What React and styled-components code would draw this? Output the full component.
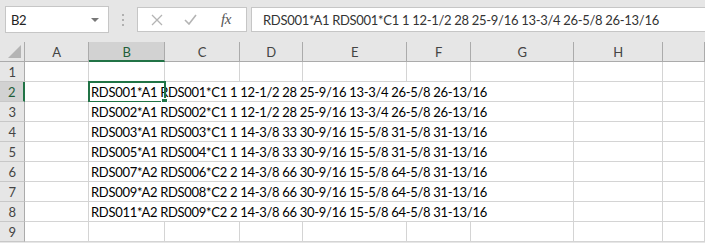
import React from 'react';
import styled, { createGlobalStyle, css } from 'styled-components';

const GlobalStyle = createGlobalStyle`
  html, body {
    margin: 0;
    padding: 0;
    background: #ffffff;
  }
  body {
    width: 705px;
    height: 243px;
    overflow: hidden;
    font-family: Lato, "Liberation Sans", sans-serif;
  }
`;

const GREEN = '#217346';
const GRID = '#d4d4d4';
const HEAD_LINE = '#ababab';

const columns = ['A', 'B', 'C', 'D', 'E', 'F', 'G', 'H', ''];
const colWidths = '25px 64px 76px 75px 63px 104px 64px 103px 89px 1fr';

const rows = {
  2: 'RDS001*A1 RDS001*C1 1 12-1/2 28 25-9/16 13-3/4 26-5/8 26-13/16',
  3: 'RDS002*A1 RDS002*C1 1 12-1/2 28 25-9/16 13-3/4 26-5/8 26-13/16',
  4: 'RDS003*A1 RDS003*C1 1 14-3/8 33 30-9/16 15-5/8 31-5/8 31-13/16',
  5: 'RDS005*A1 RDS004*C1 1 14-3/8 33 30-9/16 15-5/8 31-5/8 31-13/16',
  6: 'RDS007*A2 RDS006*C2 2 14-3/8 66 30-9/16 15-5/8 64-5/8 31-13/16',
  7: 'RDS009*A2 RDS008*C2 2 14-3/8 66 30-9/16 15-5/8 64-5/8 31-13/16',
  8: 'RDS011*A2 RDS009*C2 2 14-3/8 66 30-9/16 15-5/8 64-5/8 31-13/16',
};

const textFont = css`
  font-size: 13px;
  letter-spacing: -0.3px;
`;

const Window = styled.div`
  width: 705px;
  height: 243px;
  display: flex;
  flex-direction: column;
  background: #e6e6e6;
  overflow: hidden;
`;

const Toolbar = styled.div`
  height: 42px;
  flex: none;
  display: flex;
  align-items: flex-start;
  padding: 6px 0 0 5px;
  box-sizing: border-box;
`;

const NameBox = styled.div`
  flex: none;
  width: 104px;
  height: 27px;
  box-sizing: border-box;
  background: #fff;
  border: 1px solid #c6c6c6;
  display: flex;
  align-items: center;
  justify-content: space-between;
  padding: 0 9px 0 5px;
  ${textFont};
  color: #222;
`;

const DropArrow = styled.span`
  width: 0;
  height: 0;
  border-left: 4px solid transparent;
  border-right: 4px solid transparent;
  border-top: 4px solid #777;
`;

const Grip = styled.div`
  flex: none;
  width: 28px;
  height: 27px;
  display: flex;
  flex-direction: column;
  align-items: center;
  justify-content: center;
  gap: 3px;
  span {
    width: 2px;
    height: 2px;
    background: #b0b0b0;
  }
`;

const IconBox = styled.div`
  flex: none;
  width: 110px;
  height: 25px;
  margin-top: 1px;
  box-sizing: border-box;
  background: #fff;
  border: 1px solid #c6c6c6;
  display: flex;
  align-items: center;
  padding-left: 13px;
  gap: 21px;
`;

const FxLabel = styled.span`
  font-family: "Liberation Serif", serif;
  font-style: italic;
  font-size: 15px;
  color: #555;
  letter-spacing: -0.5px;
  margin-left: 3px;
`;

const FormulaBox = styled.div`
  flex: 1;
  min-width: 0;
  overflow: hidden;
  height: 25px;
  margin: 1px 0 0 4px;
  box-sizing: border-box;
  background: #fff;
  border: 1px solid #c6c6c6;
  border-right: none;
  padding-left: 11px;
  display: flex;
  align-items: center;
  ${textFont};
  color: #333;
  white-space: nowrap;
`;

const Sheet = styled.div`
  display: grid;
  grid-template-columns: ${colWidths};
  grid-auto-rows: 20px;
  ${textFont};
`;

const headBase = css`
  box-sizing: border-box;
  display: flex;
  align-items: center;
  justify-content: center;
  background: ${(p) => (p.$active ? '#d2d2d2' : '#e6e6e6')};
  color: ${(p) => (p.$active ? '#1e5e3a' : '#444')};
`;

const Corner = styled.div`
  box-sizing: border-box;
  position: relative;
  background: #e6e6e6;
  border-right: 1px solid ${HEAD_LINE};
  border-bottom: 1px solid ${HEAD_LINE};
  &::after {
    content: '';
    position: absolute;
    right: 3px;
    bottom: 3px;
    border-left: 13px solid transparent;
    border-bottom: 13px solid #b4b4b4;
  }
`;

const ColHead = styled.div`
  ${headBase};
  border-right: 1px solid ${HEAD_LINE};
  border-bottom: ${(p) => (p.$active ? `2px solid ${GREEN}` : `1px solid ${HEAD_LINE}`)};
  padding-top: 1px;
`;

const RowHead = styled.div`
  ${headBase};
  border-bottom: 1px solid #c8c8c8;
  border-right: ${(p) => (p.$active ? `2px solid ${GREEN}` : `1px solid ${HEAD_LINE}`)};
`;

const Cell = styled.div`
  box-sizing: border-box;
  position: relative;
  background: #fff;
  border-right: 1px solid ${GRID};
  border-bottom: 1px solid ${GRID};
  grid-column: ${(p) => (p.$span ? `span ${p.$span}` : 'auto')};
  padding: 0 2px;
  line-height: 20px;
  color: #000;
  white-space: nowrap;
`;

const Selection = styled.div`
  position: absolute;
  left: -1px;
  top: -1px;
  width: 78px;
  height: 22px;
  box-sizing: border-box;
  border: 2px solid ${GREEN};
  pointer-events: none;
  &::after {
    content: '';
    position: absolute;
    right: -4px;
    bottom: -4px;
    width: 5px;
    height: 5px;
    background: ${GREEN};
    border: 1px solid #fff;
  }
`;

const CrossIcon = () => (
  <svg width="12" height="12" viewBox="0 0 12 12">
    <path d="M1 1 L11 11 M11 1 L1 11" stroke="#b4b4b4" strokeWidth="1.3" fill="none" />
  </svg>
);

const CheckIcon = () => (
  <svg width="13" height="11" viewBox="0 0 13 11">
    <path d="M1 6 L5 10 L12 1" stroke="#b4b4b4" strokeWidth="1.6" fill="none" />
  </svg>
);

function EmptyRow({ n }) {
  return (
    <>
      <RowHead>{n}</RowHead>
      {columns.map((c, i) => (
        <Cell key={i} />
      ))}
    </>
  );
}

function DataRow({ n, text }) {
  return (
    <>
      <RowHead $active={n === 2}>{n}</RowHead>
      <Cell />
      <Cell $span={6}>
        {text}
        {n === 2 && <Selection />}
      </Cell>
      <Cell />
      <Cell />
    </>
  );
}

export default function App() {
  return (
    <Window>
      <GlobalStyle />
      <Toolbar>
        <NameBox>
          B2
          <DropArrow />
        </NameBox>
        <Grip>
          <span />
          <span />
          <span />
        </Grip>
        <IconBox>
          <CrossIcon />
          <CheckIcon />
          <FxLabel>fx</FxLabel>
        </IconBox>
        <FormulaBox>{rows[2]}</FormulaBox>
      </Toolbar>
      <Sheet>
        <Corner />
        {columns.map((c, i) => (
          <ColHead key={i} $active={c === 'B'}>
            {c}
          </ColHead>
        ))}
        <EmptyRow n={1} />
        {[2, 3, 4, 5, 6, 7, 8].map((n) => (
          <DataRow key={n} n={n} text={rows[n]} />
        ))}
        <EmptyRow n={9} />
      </Sheet>
    </Window>
  );
}
